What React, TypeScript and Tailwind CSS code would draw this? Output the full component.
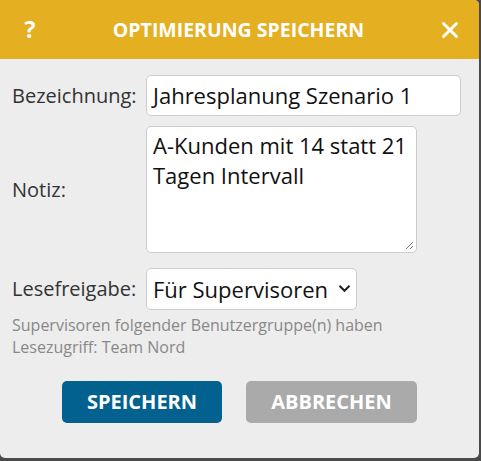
import React from "react";

export default function App() {
  return (
    <div className="w-[481px] h-[461px] bg-[#4a4a4a] overflow-hidden" style={{ fontFamily: '"Open Sans", sans-serif' }}>
      <div className="w-[479px] h-[458px] bg-[#ededed] rounded-tr-[5px] rounded-b-[5px] overflow-hidden flex flex-col">
        <div className="h-[59px] bg-[#e5af22] flex items-center justify-between pl-[24px] pr-[20px] text-white font-bold">
          <span className="text-[23px] w-[12px] text-center leading-none">?</span>
          <span className="text-[19.5px] leading-none">OPTIMIERUNG SPEICHERN</span>
          <svg width="18" height="18" viewBox="0 0 18 18">
            <path d="M2.5 2.5 L15.5 15.5 M15.5 2.5 L2.5 15.5" stroke="white" strokeWidth="3" strokeLinecap="round" />
          </svg>
        </div>
        <div className="flex flex-col pl-[12px] pr-[18px] pt-[16px]">
          <div className="flex items-center">
            <label className="w-[134px] text-[20px] text-[#333]">Bezeichnung:</label>
            <div className="flex-1 h-[41px] bg-white border border-[#ccc] rounded-[5px] flex items-center px-[6px] text-[22px] text-[#111]">
              Jahresplanung Szenario 1
            </div>
          </div>
          <div className="flex items-center mt-[10px]">
            <label className="w-[134px] text-[20px] text-[#333]">Notiz:</label>
            <div className="relative w-[271px] h-[127px] bg-white border border-[#ccc] rounded-[5px] px-[6px] pt-[3px] text-[22px] leading-[30px] text-[#111]">
              A-Kunden mit 14 statt 21 Tagen Intervall
              <svg width="9" height="9" viewBox="0 0 9 9" className="absolute right-[2px] bottom-[2px]">
                <path d="M8 1 L1 8 M8 5 L5 8" stroke="#777" strokeWidth="1" />
              </svg>
            </div>
          </div>
          <div className="flex items-center mt-[15px]">
            <label className="w-[134px] text-[20px] text-[#333]">Lesefreigabe:</label>
            <div className="w-[211px] h-[42px] bg-white border border-[#ccc] rounded-[5px] flex items-center justify-between pl-[6px] pr-[5px] text-[22px] text-[#111]">
              <span>Für Supervisoren</span>
              <svg width="13" height="9" viewBox="0 0 13 9" className="mt-[-2px]">
                <path d="M1.5 1.8 L6.5 6.8 L11.5 1.8" stroke="#222" strokeWidth="2" fill="none" />
              </svg>
            </div>
          </div>
          <div className="mt-[4px] text-[16px] leading-[22px] text-[#888]">
            Supervisoren folgender Benutzergruppe(n) haben
            <br />
            Lesezugriff: Team Nord
          </div>
          <div className="flex justify-center gap-[24px] mt-[23px] ml-[-12px] mr-[-18px]">
            <button className="w-[160px] h-[42px] rounded-[5px] bg-[#02618f] text-white font-bold text-[20px]">SPEICHERN</button>
            <button className="w-[171px] h-[42px] rounded-[5px] bg-[#aaaaaa] text-white font-bold text-[20px]">ABBRECHEN</button>
          </div>
        </div>
      </div>
    </div>
  );
}
